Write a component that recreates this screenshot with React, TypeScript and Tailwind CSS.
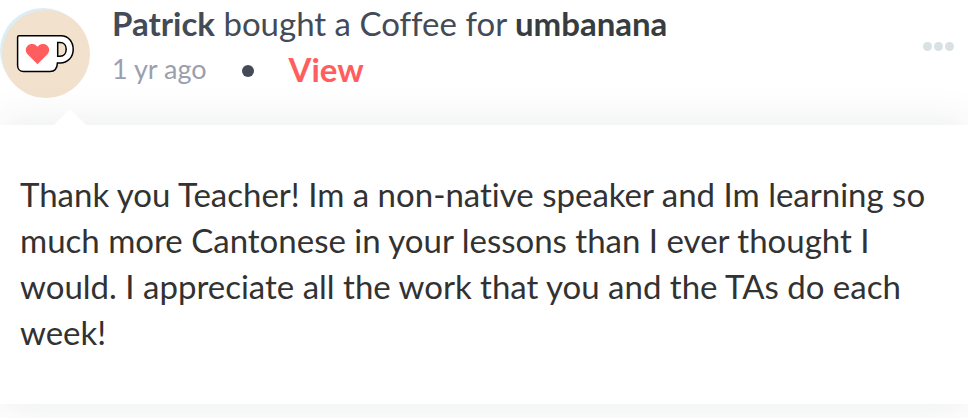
import React from "react";

function CoffeeAvatar() {
  return (
    <svg viewBox="0 0 92 98" className="h-[98px] w-[92px] shrink-0" aria-hidden="true">
      <circle cx="43" cy="51" r="43" fill="#d9eef7" />
      <circle cx="46" cy="54" r="44" fill="#f2e1cc" />
      <path
        d="M19 35.800H61C68.500 35.800 73.200 42 73.200 49.500C73.200 57 68 63 60 63H57.400C57.200 68.500 54.500 71.500 50 71.500H23.500C20 71.500 17.600 69 17.600 65.500V37.200C17.600 36.300 18.100 35.800 19 35.800Z"
        fill="#fff"
        stroke="#000"
        strokeWidth="1.500"
      />
      <path d="M57.700 42.600H60C64 42.600 66.200 45.500 66.200 49.300C66.200 53.300 64 56.300 60 56.300H57.700Z" fill="#f2e1cc" stroke="#000" strokeWidth="1.500" />
      <path
        d="M37.500 64.300L27.800 54.400C25.200 51.700 25.200 48.100 27.400 45.900C29.900 43.300 34.200 43.400 36.500 45.700L37.500 46.700L38.500 45.700C40.800 43.400 45.100 43.300 47.600 45.900C49.800 48.100 49.800 51.700 47.200 54.400Z"
        fill="#ff5e5e"
      />
    </svg>
  );
}

export default function App() {
  return (
    <article className="min-h-screen overflow-hidden bg-white font-['Lato','Noto_Sans',sans-serif] text-[#434b57] [font-variant-ligatures:none]">
      {/* ===== HEADER ===== */}
      <header className="flex items-start pb-[27px]">
        <CoffeeAvatar />

        <div className="ml-5 min-w-0 flex-1 pt-[3px]">
          <h2 className="text-[33px] leading-10">
            <a href="#patrick" className="font-bold">Patrick</a> bought a Coffee for{" "}
            <a href="#umbanana" className="font-bold text-[#373d3f]">umbanana</a>
          </h2>
          <div className="mt-1 flex items-center leading-11">
            <span className="text-[27px] text-[#9a9fae]">1 yr ago</span>
            <span className="mx-[35px] mt-1 size-3 rounded-full bg-[#434b57]"></span>
            <a href="#view" className="text-[33px] font-bold text-[#ff5e5e]">View</a>
          </div>
        </div>

        <button type="button" aria-label="More options" className="mt-10 mr-3 flex gap-[2px] p-[2px]">
          <span className="size-[9px] rounded-full bg-[#d9e1e4]"></span>
          <span className="size-[9px] rounded-full bg-[#d9e1e4]"></span>
          <span className="size-[9px] rounded-full bg-[#d9e1e4]"></span>
        </button>
      </header>

      {/* ===== MESSAGE ===== */}
      <section className="relative bg-white px-5 pt-[46px] pb-[49px] shadow-[0_0_40px_rgba(35,45,45,0.1)]">
        {/* Arrow pointing at the avatar */}
        <svg viewBox="0 0 32 16" className="absolute -top-4 left-[54px] h-4 w-8" aria-hidden="true">
          <path d="M0 16L16 0L32 16Z" fill="#fff" />
        </svg>
        <p className="text-[33px] leading-[46px] text-[#323232]">
          Thank you Teacher! Im a non-native speaker and Im learning so much more Cantonese in your lessons than I ever
          thought I would. I appreciate all the work that you and the TAs do each week!
        </p>
      </section>
    </article>
  );
}
